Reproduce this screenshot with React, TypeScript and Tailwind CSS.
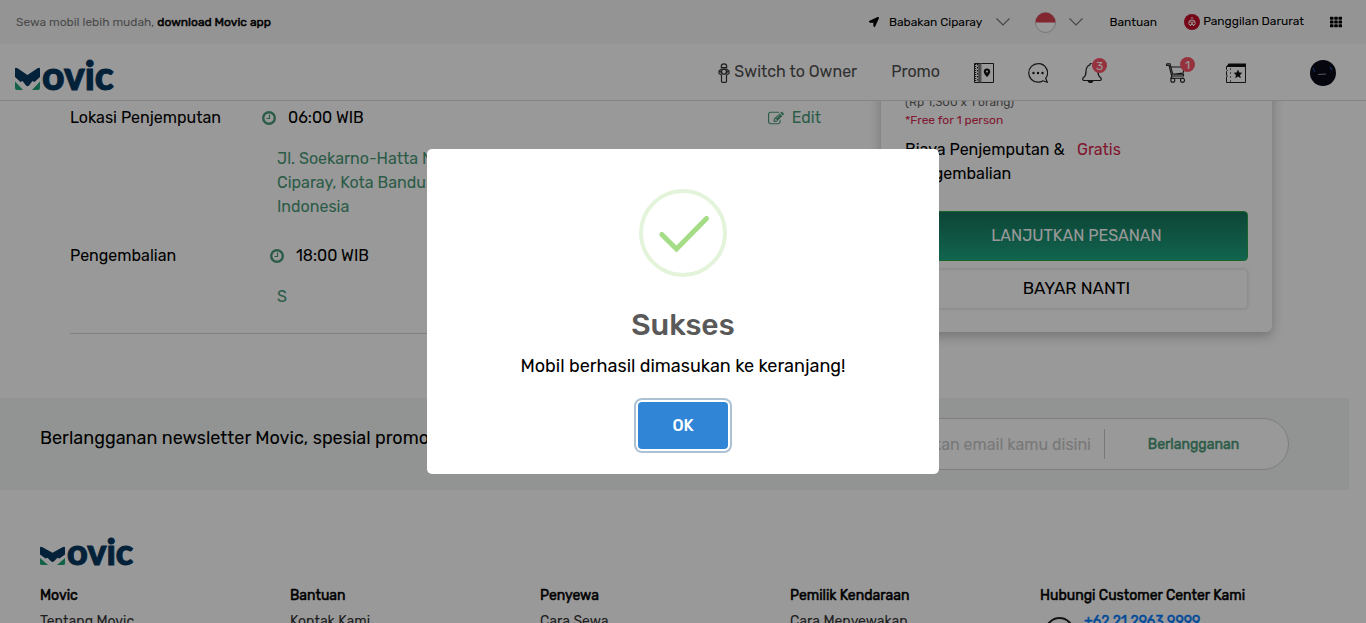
import type { ReactNode } from "react";
import { FaLocationArrow, FaTh } from "react-icons/fa";

function Logo({ compact = false }: { compact?: boolean }) {
  const h = compact ? 25 : 30;
  return (
    <svg width="102" height={h} viewBox={`0 0 102 ${h}`} role="img" aria-label="Movic" className="overflow-visible">
      <g transform={compact ? "translate(0 7) scale(1 .82)" : "translate(0 8)"}>
        <path
          d="M0 1Q0 -1 2.500 .3L12.500 7L22.500 .3Q25 -1 25 1V9L19.500 14L17.500 13L14 17.500Q12.500 19 11 17.500L7.500 13L5.500 14L0 9Z"
          fill="#05375f"
        />
        <path d="M0 13.500L8 22H2Q0 22 0 20Z" fill="#1fa37c" />
        <path d="M25 13.500L17 22H23Q25 22 25 20Z" fill="#1fa37c" />
      </g>
      <text
        x="27"
        y={h}
        className={compact ? "text-[36px]" : "text-[39px]"}
        fontFamily="Lato, sans-serif"
        fontWeight="900"
        fill="#05375f"
        stroke="#05375f"
        strokeWidth="1"
      >
        ovic
      </text>
    </svg>
  );
}

function Chevron() {
  return (
    <svg width="14" height="8" viewBox="0 0 14 8" fill="none" stroke="#777" strokeWidth="1.200">
      <path d="M.5 .5L7 7L13.500 .5" />
    </svg>
  );
}

function ClockIcon() {
  return (
    <svg width="14" height="14" viewBox="0 0 14 14" fill="none" stroke="#4a9a78">
      <circle cx="7" cy="7" r="5.800" strokeWidth="2.400" />
      <path d="M7.500 3.500V7.500H4.500" strokeWidth="1.200" />
    </svg>
  );
}

function EditIcon() {
  return (
    <svg width="16" height="14" viewBox="0 128 1792 1408" fill="currentColor">
      <path d="M888 1184l116-116-152-152-116 116v56h96v96h56zm440-720q-16-16-33 1L945 815q-17 17-1 33t33-1l350-350q17-17 1-33zm80 594v190q0 119-84.500 203.500T1120 1536H288q-119 0-203.500-84.500T0 1248V416q0-119 84.500-203.500T288 128h832q63 0 117 25 15 7 18 23 3 17-9 29l-49 49q-14 14-32 8-23-6-45-6H288q-66 0-113 47t-47 113v832q0 66 47 113t113 47h832q66 0 113-47t47-113v-126q0-13 9-22l64-64q15-15 35-7t20 29zm-96-738l288 288-672 672H640V928zm444 132l-92 92-288-288 92-92q28-28 68-28t68 28l152 152q28 28 28 68t-28 68z" />
    </svg>
  );
}

function Badge({ children, place }: { children: ReactNode; place: string }) {
  return (
    <span
      className={`absolute flex size-[15px] items-center justify-center rounded-full bg-[#fb5468] text-[12px] leading-none text-white ${place}`}
    >
      {children}
    </span>
  );
}

function DriverIcon() {
  return (
    <svg width="12" height="20" viewBox="0 0 12 20" fill="none" stroke="#333" strokeWidth="1.200">
      <path d="M3.300 5V3.500a2.700 2.700 0 0 1 5.400 0V5M3 4.500H9" />
      <path d="M3.500 6L1 8V10.500L3.500 12V18.500Q3.500 19.300 4.500 19.300H7.500Q8.500 19.300 8.500 18.500V12L11 10.500V8L8.500 6Z" />
      <circle cx="6" cy="8.700" r="2.500" />
      <path d="M1.500 8L4.500 10.500M10.500 8L7.500 10.500" />
    </svg>
  );
}

function MapBookIcon() {
  return (
    <svg width="20" height="20" viewBox="0 0 20 20" fill="none" stroke="#222" strokeWidth="1">
      <path d="M.5 .5H19.500V19.500H.5Z" />
      <path d="M1.500 1V19" strokeWidth="1.500" strokeDasharray="1 1" />
      <path d="M3.500 1V19" strokeDasharray="1.500 1.500" />
      <path d="M6.500 .5V19.500" stroke="#888" strokeWidth="2" />
      <path d="M5 .5V19.500" />
      <path d="M13 5.500a3.200 3.200 0 0 1 3.200 3.200C16.200 11 13 14 13 14S9.800 11 9.800 8.700A3.200 3.200 0 0 1 13 5.500Z" fill="#111" stroke="none" />
      <circle cx="13" cy="8.500" r="1" fill="#fff" stroke="none" />
    </svg>
  );
}

function ChatIcon() {
  return (
    <svg width="20" height="20" viewBox="0 0 20 20" fill="none" stroke="#222" strokeWidth="1.200">
      <path d="M10 .7a9.200 9.200 0 1 0 0 18.500c2 0 3.700-.5 5-1.400l4.300 1.400-1.600-3.800A9.200 9.200 0 0 0 10 .7Z" />
      <g fill="#111" stroke="none">
        <circle cx="5.500" cy="10" r="1.200" />
        <circle cx="10" cy="10" r="1.200" />
        <circle cx="14.500" cy="10" r="1.200" />
      </g>
    </svg>
  );
}

function BellIcon() {
  return (
    <svg width="20" height="20" viewBox="0 0 20 20" fill="none" stroke="#222" strokeWidth="1.200">
      <path d="M8 1.800a2 2 0 0 1 4 0C15 3 16 5.500 16 8.500C16 13 17 13.500 18.500 14.500C20 16 19 17.500 18 17.500H2C1 17.500 0 16 1.500 14.500C3 13.500 4 13 4 8.500C4 5.500 5 3 8 1.800Z" />
      <path d="M6 17.500H11Q10.500 19.500 8.500 19.500Q6.500 19.500 6 17.500Z" fill="#222" />
    </svg>
  );
}

function CartIcon() {
  return (
    <svg width="20" height="20" viewBox="0 0 20 20" fill="none" stroke="#222" strokeWidth="1.100">
      <path d="M.6 .8H4L6.800 11.500M.6 .8V2.400H3L5.800 13.500" />
      <path d="M4.800 4H19L17 10L6.500 11.300H17.500V13H6L4.800 15.300H18" />
      <circle cx="6.800" cy="17.300" r="2" />
      <circle cx="16.500" cy="17.300" r="2" />
    </svg>
  );
}

function TicketIcon() {
  return (
    <svg width="20" height="20" viewBox="0 0 20 20" fill="none" stroke="#222" strokeWidth="1">
      <path d="M.5 3.500H19.500V19.500H.5V14Q2.200 13 .5 12V8.500Q2.200 7.500 .5 6.500Z" />
      <path d="M.5 3.800L2.500 .5H20V3.800Z" fill="#111" stroke="none" />
      <path d="M4.500 5V19" strokeDasharray="2 2" stroke="#777" />
      <path d="M12 6.500l1.300 3 3 .3-2.300 2.200.8 3.200L12 13.500l-2.800 1.700.8-3.200-2.300-2.200 3-.3Z" fill="#111" stroke="none" />
    </svg>
  );
}

function Header() {
  return (
    <header className="relative z-10 border-b border-[#dddddd] bg-white">
      <div className="flex h-11 items-center justify-between bg-[#f7f7f7] pl-4 pr-6 text-[12px] text-black">
        <p className="text-[#7b7b7b]">
          Sewa mobil lebih mudah,{" "}
          <a href="#app" className="text-black [-webkit-text-stroke:0.5px]">download Movic app</a>
        </p>
        <div className="flex items-center">
          <button className="flex items-center gap-[10px]">
            <FaLocationArrow size={10} />
            Babakan Ciparay
            <span className="ml-1"><Chevron /></span>
          </button>
          <button aria-label="Bahasa" className="ml-[25px] flex items-center gap-[13px]">
            <svg width="21" height="21" viewBox="0 0 21 21">
              <circle cx="10.500" cy="10.500" r="10" fill="#fff" stroke="#c4c4c4" />
              <path d="M.5 10.500a10 10 0 0 1 20 0Z" fill="#d9414f" />
            </svg>
            <Chevron />
          </button>
          <a href="#bantuan" className="ml-[26px]">Bantuan</a>
          <a href="#darurat" className="ml-[27px] flex items-center gap-[3px]">
            <svg width="16" height="16" viewBox="0 0 16 16">
              <circle cx="8" cy="8" r="8" fill="#c40d2a" />
              <g fill="none" stroke="#fff" strokeWidth="1">
                <path d="M8 3V5M5 8a3 2 0 0 1 6 0" />
                <circle cx="6.300" cy="9.300" r="1.600" />
                <circle cx="9.700" cy="9.300" r="1.600" />
                <path d="M6 12L8 10L10 12" />
              </g>
            </svg>
            <span className="pb-[2px]">Panggilan Darurat</span>
          </a>
          <button aria-label="Menu" className="ml-[26px]"><FaTh size={12} /></button>
        </div>
      </div>
      <div className="flex h-14 items-center justify-between pl-[15px] pr-[30px]">
        <a href="#home" className="pt-[6px]"><Logo /></a>
        <nav className="flex items-center gap-[34px] pt-[2px] text-[16px] text-[#4f4f4f]">
          <a href="#owner" className="flex items-center gap-1"><DriverIcon /><span className="pb-[3px]">Switch to Owner</span></a>
          <a href="#promo" className="pb-[3px]">Promo</a>
          <a href="#trip" aria-label="Perjalanan"><MapBookIcon /></a>
          <a href="#chat" aria-label="Pesan"><ChatIcon /></a>
          <a href="#notif" aria-label="Notifikasi" className="relative"><BellIcon /><Badge place="-top-[5px] left-[10px]">3</Badge></a>
          <a href="#cart" aria-label="Keranjang" className="relative ml-[30px]"><CartIcon /><Badge place="-top-[6px] left-[14px]">1</Badge></a>
          <a href="#voucher" aria-label="Voucher" className="ml-[6px]"><TicketIcon /></a>
          <a href="#profile" aria-label="Profil" className="ml-[30px]">
            <svg width="26" height="26" viewBox="0 0 26 26">
              <circle cx="13" cy="13" r="13" fill="#0b0c18" />
              <path d="M3 8L5 12M20 7L22 10" stroke="#27408a" strokeWidth="1.500" />
              <path d="M8 14.500L16 14" stroke="#8e94a8" />
            </svg>
          </a>
        </nav>
      </div>
    </header>
  );
}

function Booking() {
  return (
    <main className="flex items-start gap-[60px] pb-16 pl-[70px] pr-[94px] text-[16px] leading-6 text-black">
      <section className="flex-1 border-b border-[#d8d8d8] pb-6 pt-[5px]">
        <div className="flex">
          <h2 className="w-[192px]">Lokasi Penjemputan</h2>
          <p className="flex flex-1 items-center gap-3"><ClockIcon />06:00 WIB</p>
          <a href="#edit" className="flex items-center gap-2 text-[#4a9a78]"><EditIcon />Edit</a>
        </div>
        <address className="mt-[17px] pl-[207px] not-italic text-[#4a9a78]">
          Jl. Soekarno-Hatta No.<br />Ciparay, Kota Bandung,<br />Indonesia
        </address>
        <div className="mt-[25px] flex">
          <h2 className="w-[200px]">Pengembalian</h2>
          <p className="flex items-center gap-3"><ClockIcon />18:00 WIB</p>
        </div>
        <p className="mt-[17px] pl-[207px] text-[#4a9a78]">S</p>
      </section>
      <aside className="-mt-5 w-[391px] rounded-md bg-white px-6 pb-[23px] pt-3 shadow-[0_4px_12px_rgba(0,0,0,0.25)]">
        <p className="text-[12px] leading-[18px] text-[#666]">(Rp 1,300 x 1 orang)</p>
        <p className="text-[12px] leading-[18px] text-[#d6294f]">*Free for 1 person</p>
        <div className="mt-[9px] flex gap-3">
          <p className="w-[160px]">Biaya Penjemputan &amp; Pengembalian</p>
          <p className="text-[#d6294f]">Gratis</p>
        </div>
        <button className="mt-[25px] h-[50px] w-full rounded border border-[#28a745] bg-linear-to-b from-[#16735b] to-[#1da884] text-white">
          LANJUTKAN PESANAN
        </button>
        <button className="mt-2 h-10 w-full rounded border border-[#ededed] bg-white pb-[2px] text-[17px] shadow-[0_0_3px_rgba(0,0,0,0.12)]">
          BAYAR NANTI
        </button>
      </aside>
    </main>
  );
}

function Newsletter() {
  return (
    <section className="mr-[17px] flex h-[92px] items-start justify-between bg-[#f3f7f5] pl-10 pr-[60px] pt-5 text-black">
      <h2 className="pt-1 text-[18px] leading-8">Berlangganan newsletter Movic, spesial promo</h2>
      <form className="flex h-[52px] w-[400px] items-center rounded-full border border-[#d2d2d2] bg-white">
        <input
          aria-label="Email"
          placeholder="Masukan email kamu disini"
          className="h-[30px] min-w-0 flex-1 border-r border-[#c8c8c8] pr-[13px] text-right text-[16px] outline-none placeholder:text-[#c8c8c8]"
        />
        <button type="button" className="w-[183px] pr-[6px] text-[14px] text-[#4a9a78] [-webkit-text-stroke:0.5px]">Berlangganan</button>
      </form>
    </section>
  );
}

const columns = [
  { title: "Movic", link: "Tentang Movic" },
  { title: "Bantuan", link: "Kontak Kami" },
  { title: "Penyewa", link: "Cara Sewa" },
  { title: "Pemilik Kendaraan", link: "Cara Menyewakan" },
];

function Footer() {
  return (
    <footer className="px-10 pt-[50px] text-[14px] leading-5 text-black">
      <Logo compact />
      <div className="mt-[21px] flex">
        {columns.map((c) => (
          <div key={c.title} className="w-[250px]">
            <h3 className="[-webkit-text-stroke:0.5px]">{c.title}</h3>
            <a href="#info" className="mt-[6px] block text-[#333]">{c.link}</a>
          </div>
        ))}
        <div className="flex-1">
          <h3 className="[-webkit-text-stroke:0.5px]">Hubungi Customer Center Kami</h3>
          <a href="tel:+622129639999" className="mt-[6px] flex items-start gap-[10px] pl-[5px] text-[#007bff]">
            <svg width="29" height="29" viewBox="0 0 29 29" fill="none" stroke="#222" strokeWidth="2" className="mt-[5px]">
              <circle cx="14.500" cy="14.500" r="13.500" />
              <path d="M9 8l3 4-1.500 2a12 12 0 0 0 5 5l2-1.500 3.500 3" />
            </svg>
            <span className="[-webkit-text-stroke:0.5px]">+62 21 2963 9999</span>
          </a>
        </div>
      </div>
    </footer>
  );
}

function SuccessDialog() {
  return (
    <div className="fixed inset-0 z-20 flex items-center justify-center bg-black/40">
      <div role="dialog" aria-modal="true" aria-labelledby="dialog-title" className="flex w-[512px] flex-col items-center rounded-[5px] bg-white pb-[25px] pt-10">
        <svg width="88" height="88" viewBox="0 0 88 88" fill="none">
          <circle cx="44" cy="44" r="42" stroke="#e4f4db" strokeWidth="4" />
          <path d="M22.800 45.500L37.500 60L67.500 29.500" stroke="#a5dc86" strokeWidth="5" strokeLinecap="round" />
        </svg>
        <h1 id="dialog-title" className="mt-6 text-[30px] font-medium leading-[48px] text-[#595959]">Sukses</h1>
        <p className="mt-1 text-[18px] leading-[26px] text-black">Mobil berhasil dimasukan ke keranjang!</p>
        <button className="mt-[23px] h-[47px] w-[90px] rounded-[4px] bg-[#3085d6] text-[16px] font-medium text-white shadow-[0_0_0_2px_#fff,0_0_0_4px_rgba(50,100,150,0.4)]">
          OK
        </button>
      </div>
    </div>
  );
}

export default function App() {
  return (
    <div className="h-screen overflow-hidden bg-white font-['Rubik',Roboto,sans-serif]">
      <Header />
      <Booking />
      <Newsletter />
      <Footer />
      <SuccessDialog />
    </div>
  );
}
